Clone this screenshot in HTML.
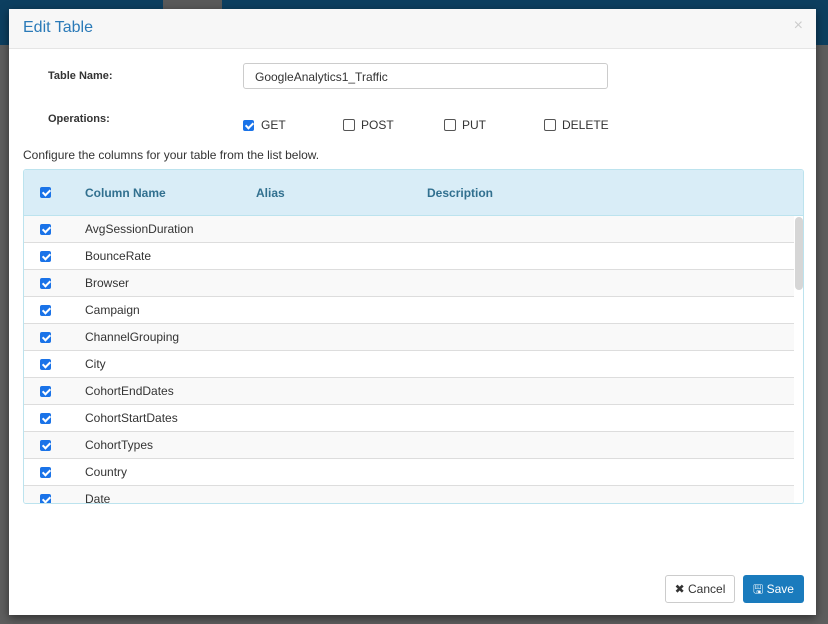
<html><head><style>
body{margin:0;width:828px;height:624px;background:#5e5e5e;position:relative;overflow:hidden;font-family:"Liberation Sans",sans-serif;font-size:12px;color:#333}
.top{position:absolute;left:0;top:0;width:828px;height:45px;background:#0d3f60}
.tab{position:absolute;left:163px;top:0;width:59px;height:9px;background:#5a5a5a}
.modal{position:absolute;left:9px;top:9px;width:807px;height:606px;background:#fff;box-shadow:0 3px 9px rgba(0,0,0,.5)}
.hd{height:39px;background:#f7f7f7;border-bottom:1px solid #e5e5e5;position:relative}
.hd h4{margin:0;position:absolute;left:14px;top:10px;font-size:16px;font-weight:normal;color:#2a7ab8}
.x{position:absolute;right:13px;top:8px;color:#ccc;font-size:16px}
.abs{position:absolute}
.cb{position:absolute;width:11px;height:11px;border-radius:2px;background:#1a73e8}
.cb:after{content:"";position:absolute;left:3.5px;top:1px;width:3px;height:6px;border:solid #fff;border-width:0 2px 2px 0;transform:rotate(45deg)}
.ub{position:absolute;width:10px;height:10px;border:1px solid #555;border-radius:2px;background:#fff}
.tbl{position:absolute;left:14px;top:160px;width:779px;height:333px;border:1px solid #bce3ee;border-radius:3px;overflow:hidden}
.th{height:45px;background:#d9edf7;border-bottom:1px solid #bce3ee;position:relative;font-weight:bold;color:#31708f}
.row{height:26px;border-bottom:1px solid #ddd;position:relative;width:770px}
.row:nth-child(odd){background:#f9f9f9}
.btn{position:absolute;height:26px;border-radius:3px;font-size:12px;line-height:26px;text-align:center}
</style></head><body>
<div class="top"></div><div class="tab"></div>
<div class="modal">
<div class="hd"><h4>Edit Table</h4><span class="x">×</span></div>
<div class="abs" style="left:39px;top:61px;font-weight:bold;font-size:11px">Table Name:</div>
<div class="abs" style="left:234px;top:54px;width:363px;height:26px;border:1px solid #ccc;border-radius:3px;line-height:26px;padding-left:11px;box-sizing:border-box;width:365px">GoogleAnalytics1_Traffic</div>
<div class="abs" style="left:39px;top:104px;font-weight:bold;font-size:11px">Operations:</div>
<div class="cb" style="left:234px;top:111px"></div><div class="abs" style="left:252px;top:109px">GET</div>
<div class="ub" style="left:334px;top:110px"></div><div class="abs" style="left:352px;top:109px">POST</div>
<div class="ub" style="left:435px;top:110px"></div><div class="abs" style="left:453px;top:109px">PUT</div>
<div class="ub" style="left:535px;top:110px"></div><div class="abs" style="left:553px;top:109px">DELETE</div>
<div class="abs" style="left:14px;top:139px">Configure the columns for your table from the list below.</div>
<div class="tbl">
<div class="th"><div class="cb" style="left:16px;top:17px"></div><span class="abs" style="left:61px;top:16px">Column Name</span><span class="abs" style="left:232px;top:16px">Alias</span><span class="abs" style="left:403px;top:16px">Description</span></div>
<div>
<div class="row"><div class="cb" style="left:16px;top:8px"></div><span class="abs" style="left:61px;top:6px">AvgSessionDuration</span></div>
<div class="row"><div class="cb" style="left:16px;top:8px"></div><span class="abs" style="left:61px;top:6px">BounceRate</span></div>
<div class="row"><div class="cb" style="left:16px;top:8px"></div><span class="abs" style="left:61px;top:6px">Browser</span></div>
<div class="row"><div class="cb" style="left:16px;top:8px"></div><span class="abs" style="left:61px;top:6px">Campaign</span></div>
<div class="row"><div class="cb" style="left:16px;top:8px"></div><span class="abs" style="left:61px;top:6px">ChannelGrouping</span></div>
<div class="row"><div class="cb" style="left:16px;top:8px"></div><span class="abs" style="left:61px;top:6px">City</span></div>
<div class="row"><div class="cb" style="left:16px;top:8px"></div><span class="abs" style="left:61px;top:6px">CohortEndDates</span></div>
<div class="row"><div class="cb" style="left:16px;top:8px"></div><span class="abs" style="left:61px;top:6px">CohortStartDates</span></div>
<div class="row"><div class="cb" style="left:16px;top:8px"></div><span class="abs" style="left:61px;top:6px">CohortTypes</span></div>
<div class="row"><div class="cb" style="left:16px;top:8px"></div><span class="abs" style="left:61px;top:6px">Country</span></div>
<div class="row"><div class="cb" style="left:16px;top:8px"></div><span class="abs" style="left:61px;top:6px">Date</span></div>
</div>
<div class="abs" style="left:770px;top:46px;width:9px;height:290px;background:#fff"></div>
<div class="abs" style="left:771px;top:47px;width:8px;height:73px;background:#d6d6d6;border-radius:4px"></div>
</div>
<div class="btn" style="left:656px;top:566px;width:68px;border:1px solid #ccc;color:#333">✖ Cancel</div>
<div class="btn" style="left:734px;top:566px;width:61px;height:28px;background:#1a7bbd;color:#fff;line-height:28px">🖫 Save</div>
</div>
</body></html>
